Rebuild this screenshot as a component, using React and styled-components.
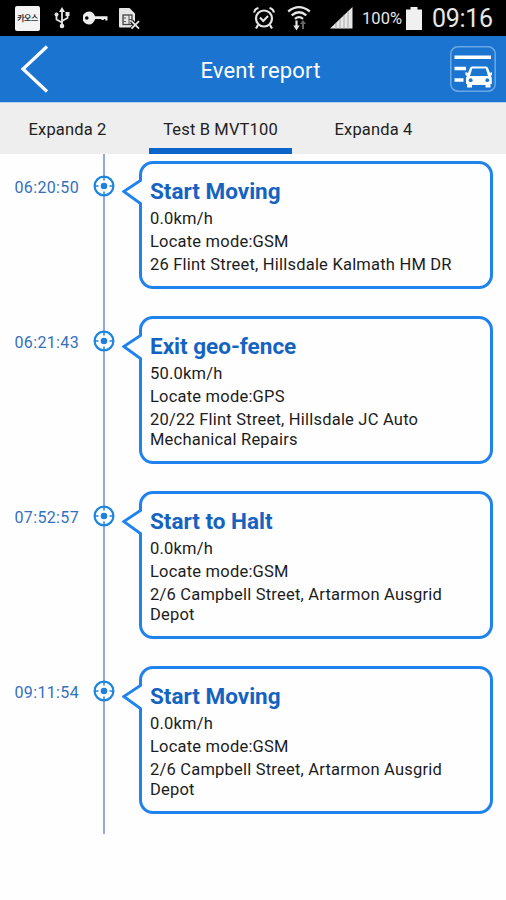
import React from "react";
import styled, { createGlobalStyle } from "styled-components";

const GlobalStyle = createGlobalStyle`
  * {
    box-sizing: border-box;
  }

  body {
    margin: 0;
    background: #fefefe;
    font-family: Roboto, "Noto Sans", sans-serif;
    color: #1c1c1c;
  }
`;

const Screen = styled.div`
  width: 506px;
  height: 900px;
  overflow: hidden;
`;

const StatusBar = styled.div`
  display: flex;
  justify-content: space-between;
  height: 36px;
  padding: 0 12px 0 15px;
  background: #000;
  color: #e6e6e6;
`;

const StatusGroup = styled.div`
  display: flex;
  align-items: center;
`;

const StatusIcon = styled.svg`
  display: block;
  flex: none;
  margin-left: ${(props) => props.$gap || 0}px;
`;

const AppBadge = styled.div`
  display: flex;
  align-items: center;
  justify-content: center;
  width: 25px;
  height: 25px;
  border-radius: 2px;
  background: #f4f4f4;
  color: #333;
  font: 700 8px/1 "Noto Sans CJK KR", sans-serif;
  letter-spacing: -0.6px;
  white-space: nowrap;
`;

const Battery = styled.span`
  width: 41px;
  margin-left: 9px;
  font-size: 16.5px;
  letter-spacing: 0.1px;
  white-space: nowrap;
`;

const Clock = styled.span`
  width: 62px;
  margin-left: 10px;
  font-size: 25px;
  letter-spacing: -0.3px;
  white-space: nowrap;
`;

const Header = styled.header`
  display: grid;
  grid-template-columns: 60px 1fr 56px;
  align-items: center;
  height: 67px;
  border-bottom: 1px solid #b9d4f1;
  background: #1a74d0;
  color: #fff;
`;

const Title = styled.h1`
  margin: 0;
  padding: 3px 0 0 11px;
  font-size: 22px;
  font-weight: 400;
  line-height: 28px;
  letter-spacing: 0.15px;
  text-align: center;
`;

const IconButton = styled.button`
  display: flex;
  padding: 0;
  border: 0;
  background: none;
  color: inherit;
`;

const BackButton = styled(IconButton)`
  padding-left: 20px;
`;

const Tabs = styled.nav`
  display: flex;
  gap: 29px;
  height: 51px;
  padding-left: 15px;
  background: #eee;
`;

const Tab = styled.button`
  height: 51px;
  width: ${(props) => props.$width}px;
  padding: 9px 0 0;
  border: 0;
  border-bottom: 6px solid ${(props) => (props.$active ? "#0b64c8" : "transparent")};
  background: none;
  color: #222;
  font: 400 16.5px/20px Roboto, sans-serif;
  letter-spacing: 0.15px;
  white-space: nowrap;
`;

const Timeline = styled.ul`
  margin: 0;
  padding: 0;
  list-style: none;
`;

const Row = styled.li`
  display: grid;
  grid-template-columns: 90px 27px 1fr;
`;

const TimeLabel = styled.time`
  padding: 24px 0 0 14.5px;
  color: #3470bd;
  font-size: 16px;
  line-height: 20px;
  letter-spacing: 0.35px;
`;

const Rail = styled.div`
  display: flex;
  justify-content: center;
  padding-top: 21px;
  background: linear-gradient(#93a6e0, #93a6e0) center / 2px 100% no-repeat;
`;

const Card = styled.article`
  position: relative;
  margin: 7px 13px 20px 22px;
  padding: 13px 20px 11px 8px;
  border: 3px solid #1f82ee;
  border-radius: 14px;
`;

const Pointer = styled.svg`
  position: absolute;
  left: -20px;
  top: 12px;
`;

const EventName = styled.h2`
  margin: 0 0 4px;
  color: #1463c1;
  font-size: 22.5px;
  font-weight: 700;
  line-height: 28px;
`;

const Line = styled.p`
  margin: 0 0 3px;
  font-size: 16.5px;
  line-height: 20px;
  letter-spacing: 0.21px;

  &:last-child {
    margin: 0;
  }
`;

const events = [
  {
    time: "06:20:50",
    name: "Start Moving",
    speed: "0.0km/h",
    mode: "GSM",
    address: "26 Flint Street, Hillsdale Kalmath HM DR",
  },
  {
    time: "06:21:43",
    name: "Exit geo-fence",
    speed: "50.0km/h",
    mode: "GPS",
    address: "20/22 Flint Street, Hillsdale JC Auto Mechanical Repairs",
  },
  {
    time: "07:52:57",
    name: "Start to Halt",
    speed: "0.0km/h",
    mode: "GSM",
    address: "2/6 Campbell Street, Artarmon Ausgrid Depot",
  },
  {
    time: "09:11:54",
    name: "Start Moving",
    speed: "0.0km/h",
    mode: "GSM",
    address: "2/6 Campbell Street, Artarmon Ausgrid Depot",
  },
];

const tabs = [
  { label: "Expanda 2", width: 105 },
  { label: "Test B MVT100", width: 143, active: true },
  { label: "Expanda 4", width: 105 },
];

function UsbIcon() {
  return (
    <StatusIcon $gap={14} width="16" height="22" viewBox="0 0 16 22" fill="none" stroke="#e6e6e6" strokeWidth="1.8">
      <path d="M8 4v14M8 15.5l-5.5-3V8M8 14l5.5-3V8" />
      <path d="M8 0l3 5H5z" fill="#e6e6e6" stroke="none" />
      <circle cx="2.5" cy="7.5" r="2" fill="#e6e6e6" stroke="none" />
      <path d="M11.5 5h4v4h-4z" fill="#e6e6e6" stroke="none" />
      <circle cx="8" cy="19" r="2.3" fill="#e6e6e6" stroke="none" />
    </StatusIcon>
  );
}

function KeyIcon() {
  return (
    <StatusIcon $gap={13} width="25" height="14" viewBox="0 0 25 14" fill="#eee">
      <path
        fillRule="evenodd"
        d="M6 .5c3 0 5 1.800 6 4.700H24.500V9.500H22.300V8H20.800V9H18.500V8H12.200C11 11.500 9 13.500 6 13.500A6.500 6.500 0 0 1 6 .5zM3.800 5.200a1.800 1.800 0 1 0 0 3.600 1.800 1.800 0 0 0 0-3.600z"
      />
    </StatusIcon>
  );
}

function SimIcon() {
  return (
    <StatusIcon $gap={11} width="21" height="23" viewBox="0 0 21 23" fill="none">
      <path d="M0 2Q0 1 1 1H10.500L16 6.500V20.500H1Q0 20.500 0 19.500z" fill="#e6e6e6" />
      <rect x="4" y="8" width="9" height="9.500" stroke="#444" strokeWidth="1.300" />
      <path d="M4 11h3M4 14.500h3M10 8v9M10 12.500h3" stroke="#555" />
      <path d="M12.500 14l7.500 8M20 14l-7.500 8" stroke="#000" strokeWidth="4" />
      <path d="M12.500 14.200l7.500 7.500M20 14.200l-7.500 7.500" stroke="#e6e6e6" strokeWidth="1.900" />
    </StatusIcon>
  );
}

function AlarmIcon() {
  return (
    <StatusIcon width="22" height="24" viewBox="0 0 22 24" fill="none" stroke="#e6e6e6" strokeWidth="2.200">
      <circle cx="11" cy="12.500" r="8" />
      <path d="M1.200 6.500Q1.500 3 5.500 2M20.800 6.500Q20.500 3 16.500 2M5 19l-2 3.500M17 19l2 3.500" />
      <path d="M7 11.500l3.300 3.500L15 10" strokeWidth="2" />
    </StatusIcon>
  );
}

function WifiIcon() {
  return (
    <StatusIcon $gap={12} width="24" height="26" viewBox="0 0 24 26" fill="none" stroke="#e6e6e6" strokeWidth="2.300">
      <path d="M1.200 6.500Q12-2.200 22.800 6.500M4.700 10.300Q12 4.200 19.300 10.300M8 13.800Q12 10.500 16 13.800" />
      <path d="M9.500 15.500v7" strokeWidth="2.200" />
      <path d="M6.300 20.500h6.400L9.500 25.500z" fill="#e6e6e6" stroke="none" />
      <path d="M16 24v-6" stroke="#666" strokeWidth="2" />
      <path d="M13 19h6l-3-4z" fill="#666" stroke="none" />
    </StatusIcon>
  );
}

function SignalIcon() {
  return (
    <StatusIcon $gap={19} width="23" height="22" viewBox="0 0 23 22">
      <path d="M0 21.500L22.500 0V21.500z" fill="#e6e6e6" />
      <path d="M6 16v6M10 12v10M14 8v14M18 4v18" stroke="#999" strokeWidth=".8" />
    </StatusIcon>
  );
}

function BatteryIcon() {
  return (
    <StatusIcon $gap={3} width="16" height="23" viewBox="0 0 16 23" fill="#f0f0f0">
      <path d="M4.500 0h7v2.500H16V23H0V2.500h4.500z" />
    </StatusIcon>
  );
}

function BackIcon() {
  return (
    <svg width="30" height="48" viewBox="0 0 30 48" fill="none" stroke="#fff" strokeWidth="3.200">
      <path d="M27 1.500L3 24L27 46.500" />
    </svg>
  );
}

function VehicleListIcon() {
  return (
    <svg width="46" height="46" viewBox="0 0 46 46" fill="none">
      <rect x=".8" y=".8" width="44.400" height="44.400" rx="7" stroke="#6ba8e6" strokeWidth="1.500" />
      <path d="M4.500 11.200h36.500M4.500 22.500h11.500M4.500 34h9" stroke="#fff" strokeWidth="3.400" />
      <path
        fillRule="evenodd"
        fill="#fff"
        d="M20 22Q20.500 20.500 22 20.500H36Q37.500 20.500 38 22L40 27L42 26V29L40.800 30Q41.800 31 41.800 33V38H40.500V41.500H35.500V39H22V41.500H17V38H16V33Q16 31 17 30L15.500 29V26L18 27zM22.200 22.500L20 30H38L35.800 22.500z"
      />
      <circle cx="20.700" cy="34.200" r="1.900" fill="#1a74d0" />
      <circle cx="37.300" cy="34.200" r="1.900" fill="#1a74d0" />
    </svg>
  );
}

function Marker() {
  return (
    <svg width="22" height="22" viewBox="0 0 22 22" fill="none">
      <circle cx="11" cy="11" r="9.400" fill="#fff" stroke="#1f86dc" strokeWidth="2.200" />
      <path d="M11 2v3.500M11 16.500V20M2 11h3.500M16.500 11H20" stroke="#1f86dc" strokeWidth="1.500" />
      <circle cx="11" cy="11" r="3.300" fill="#1f7fdc" />
    </svg>
  );
}

function EventRow({ event }) {
  return (
    <Row>
      <TimeLabel>{event.time}</TimeLabel>
      <Rail>
        <Marker />
      </Rail>
      <Card>
        <Pointer width="21" height="32" viewBox="0 0 21 32">
          <path d="M17 4.500h4v23h-4z" fill="#fefefe" />
          <path d="M18.500 0V4.500L1.800 15.500L18.500 27.500V32" fill="#fefefe" stroke="#1f82ee" strokeWidth="2.800" />
        </Pointer>
        <EventName>{event.name}</EventName>
        <Line>{event.speed}</Line>
        <Line>Locate mode:{event.mode}</Line>
        <Line>{event.address}</Line>
      </Card>
    </Row>
  );
}

function App() {
  return (
    <Screen>
      <GlobalStyle />
      <StatusBar>
        <StatusGroup>
          <AppBadge>카오스</AppBadge>
          <UsbIcon />
          <KeyIcon />
          <SimIcon />
        </StatusGroup>
        <StatusGroup>
          <AlarmIcon />
          <WifiIcon />
          <SignalIcon />
          <Battery>100%</Battery>
          <BatteryIcon />
          <Clock>09:16</Clock>
        </StatusGroup>
      </StatusBar>
      <Header>
        <BackButton aria-label="Back">
          <BackIcon />
        </BackButton>
        <Title>Event report</Title>
        <IconButton aria-label="Vehicles">
          <VehicleListIcon />
        </IconButton>
      </Header>
      <Tabs>
        {tabs.map((tab) => (
          <Tab key={tab.label} $width={tab.width} $active={tab.active}>
            {tab.label}
          </Tab>
        ))}
      </Tabs>
      <Timeline>
        {events.map((event, i) => (
          <EventRow key={i} event={event} />
        ))}
      </Timeline>
    </Screen>
  );
}

export default App;
